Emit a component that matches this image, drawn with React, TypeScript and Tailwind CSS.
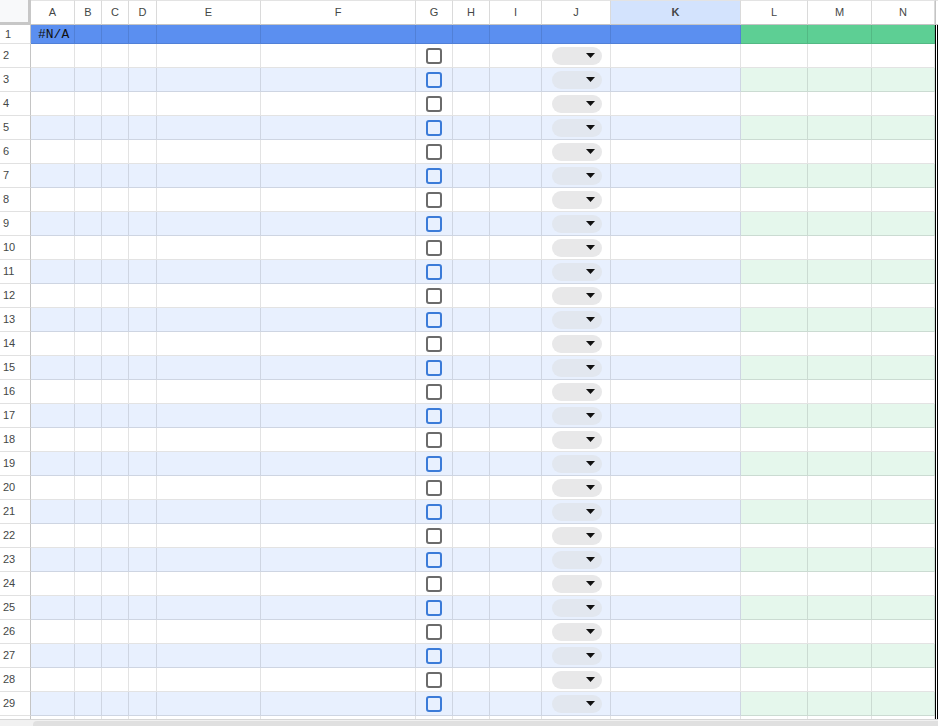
import React from "react";

// column letters and the grid template shared by every row (row header + A..N + edge)
const LETTERS = ["A", "B", "C", "D", "E", "F", "G", "H", "I", "J", "K", "L", "M", "N"];
const ROW_GRID =
  "grid grid-cols-[31px_44px_27px_27px_28px_104px_155px_37px_37px_52px_69px_130px_67px_64px_63px_3px]";

const GREEN_COLS = ["L", "M", "N"];

const Checkbox = ({ banded }: { banded: boolean }) =>
  banded ? (
    <span className="block size-4 rounded-[3px] border-2 border-[#3b7bd8] bg-[#e8f0fe]" />
  ) : (
    <span className="block size-4 rounded-[3px] border-2 border-[#6b6b6b] bg-white" />
  );

const DropdownChip = ({ banded }: { banded: boolean }) => (
  <div
    className={`ml-[10px] flex h-[18px] w-[50px] items-center justify-end rounded-full pr-[7px] ${
      banded ? "bg-[#e2e7ef]" : "bg-[#e8e8e9]"
    }`}
  >
    <svg width="9" height="5" viewBox="0 0 9 5">
      <path d="M0 0h9L4.5 5z" fill="#111" />
    </svg>
  </div>
);

const HeaderRow = () => (
  <div className={`${ROW_GRID} h-[25px]`}>
    <div className="border-r-[3px] border-b-[3px] border-[#c7c7c7] bg-[#f8f9fa]" />
    {LETTERS.map((l) => (
      <div
        key={l}
        className={`flex items-center justify-center border-t border-r border-b border-t-[#e3e3e3] border-r-[#dadada] border-b-[#c4c4c4] text-[11px] text-[#444746] ${
          l === "K" ? "bg-[#d3e3fd] font-bold text-[#1f1f1f]" : "bg-white"
        }`}
      >
        {l}
      </div>
    ))}
    <div className="border-t border-l border-b border-t-[#e3e3e3] border-l-[#c4c4c4] border-b-[#c4c4c4] bg-white" />
  </div>
);

const FirstRow = () => (
  <div className={`${ROW_GRID} h-[19px]`}>
    <div className="flex items-center border-r border-b border-r-[#c4c4c4] border-b-[#e1e1e1] bg-white pl-[5px] text-[11px] leading-none text-[#444746]">
      1
    </div>
    {LETTERS.map((l) => (
      <div
        key={l}
        className={`flex items-center border-r border-b border-black/[0.1] ${
          GREEN_COLS.includes(l) ? "bg-[#5dcf94]" : "bg-[#5b8ff0]"
        }`}
      >
        {l === "A" && (
          <span className="pl-[7px] font-['Liberation_Mono',monospace] text-[13px] leading-none text-[#111]">
            #N/A
          </span>
        )}
      </div>
    ))}
    <div className="border-x border-black bg-white" />
  </div>
);

const BodyRow = ({ n, label = true }: { n: number; label?: boolean }) => {
  const banded = n % 2 === 1;
  return (
    <div className={`${ROW_GRID} h-[24px]`}>
      <div className="flex items-center border-r border-b border-r-[#c4c4c4] border-b-[#e1e1e1] bg-white pl-[3px] text-[11px] leading-none text-[#444746]">
        {label && n}
      </div>
      {LETTERS.map((l) => {
        const bg = banded ? (GREEN_COLS.includes(l) ? "bg-[#e5f7ec]" : "bg-[#e8f0fe]") : "bg-white";
        return (
          <div
            key={l}
            className={`flex items-center border-r border-b border-black/[0.11] ${bg} ${
              l === "G" ? "justify-center" : ""
            }`}
          >
            {l === "G" && <Checkbox banded={banded} />}
            {l === "J" && <DropdownChip banded={banded} />}
          </div>
        );
      })}
      <div className="border-x border-black bg-white" />
    </div>
  );
};

export default function App() {
  const rows = Array.from({ length: 28 }, (_, i) => i + 2);
  return (
    <div className="flex h-[726px] w-[938px] flex-col overflow-hidden bg-white font-['Liberation_Sans',Arial,sans-serif]">
      <div className="h-[719px] overflow-hidden">
        <HeaderRow />
        <FirstRow />
        {rows.map((n) => (
          <BodyRow key={n} n={n} />
        ))}
        {/* row 30 only peeks in above the scrollbar */}
        <BodyRow n={30} label={false} />
      </div>
      {/* horizontal scrollbar */}
      <div className="flex h-[7px] border-t border-[#d6d6d6] bg-[#f1f1f1]">
        <div className="ml-[33px] mt-[1px] flex-1 rounded-tl-[4px] bg-[#e0e0e0]" />
      </div>
    </div>
  );
}
